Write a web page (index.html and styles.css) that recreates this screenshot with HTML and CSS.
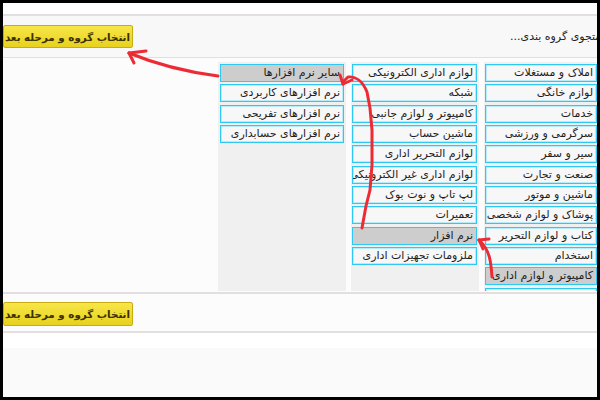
FILE: index.html
```html
<!DOCTYPE html>
<html lang="fa">
<head>
<meta charset="utf-8">
<title>انتخاب گروه</title>
<link rel="stylesheet" href="styles.css">
</head>
<body>
<div class="frame">
  <div class="page">
    <div class="top-gap"></div>
    <div class="header">
      <div class="search-label">جستجوی گروه بندی...</div>
      <button class="next-btn">انتخاب گروه و مرحله بعد</button>
    </div>
    <div class="main">
      <div class="columns">
        <div class="col col-first">
          <div class="item">املاک و مستغلات</div>
          <div class="item">لوازم خانگی</div>
          <div class="item">خدمات</div>
          <div class="item">سرگرمی و ورزشی</div>
          <div class="item">سیر و سفر</div>
          <div class="item">صنعت و تجارت</div>
          <div class="item">ماشین و موتور</div>
          <div class="item">پوشاک و لوازم شخصی</div>
          <div class="item">کتاب و لوازم التحریر</div>
          <div class="item">استخدام</div>
          <div class="item selected">کامپیوتر و لوازم اداری</div>
          <div class="item">موبایل و تبلت</div>
        </div>
        <div class="col">
          <div class="item">لوازم اداری الکترونیکی</div>
          <div class="item">شبکه</div>
          <div class="item">کامپیوتر و لوازم جانبی</div>
          <div class="item">ماشین حساب</div>
          <div class="item">لوازم التحریر اداری</div>
          <div class="item">لوازم اداری غیر الکترونیکی</div>
          <div class="item">لپ تاپ و نوت بوک</div>
          <div class="item">تعمیرات</div>
          <div class="item selected">نرم افزار</div>
          <div class="item">ملزومات تجهیزات اداری</div>
        </div>
        <div class="col col-narrow">
          <div class="item selected">سایر نرم افزارها</div>
          <div class="item">نرم افزارهای کاربردی</div>
          <div class="item">نرم افزارهای تفریحی</div>
          <div class="item">نرم افزارهای حسابداری</div>
        </div>
      </div>
    </div>
    <div class="footer">
      <button class="next-btn">انتخاب گروه و مرحله بعد</button>
    </div>
    <div class="tail-white"></div>
    <div class="tail"></div>
  </div>
</div>
<svg class="marks" width="600" height="400" viewBox="0 0 600 400">
  <g fill="none" stroke="#ec2b35" stroke-width="3" stroke-linecap="round" stroke-linejoin="round">
    <path d="M218,76 C195,73 165,68 129,53"/>
    <path d="M129,53 L146,51"/>
    <path d="M129,53 L134,63"/>
    <path d="M362,228 L366,206 L370,190 L372,165 L372,130 L370,108 L367,92 C363,82 356,76 348,77 L343,82"/>
    <path d="M343,84 L340,75"/>
    <path d="M343,84 L352,80"/>
    <path d="M492,277 C491,262 490,250 479,240"/>
    <path d="M479,240 L489,239"/>
    <path d="M479,240 L483,249"/>
  </g>
</svg>
</body>
</html>
```

FILE: styles.css
```css
html, body {
  margin: 0;
  padding: 0;
  background: #000;
}
body {
  position: relative;
  width: 600px;
  height: 400px;
  overflow: hidden;
  font-family: "DejaVu Sans", sans-serif;
}
.frame {
  margin: 3px 0 0 3px;
  width: 594px;
  height: 394px;
  overflow: hidden;
  background: #fafafa;
}
.page {
  width: 596px;
}
.top-gap {
  height: 11px;
  background: #ffffff;
}
.header {
  direction: rtl;
  display: flex;
  align-items: center;
  justify-content: space-between;
  height: 41px;
  background: #f8f8f8;
  border-top: 2px solid #e3dfe0;
  border-bottom: 1px solid #e3dfe0;
}
.search-label {
  margin-right: -13px;
  font-size: 11px;
  color: #222;
  white-space: nowrap;
}
.next-btn {
  direction: rtl;
  margin: 0;
  width: 130px;
  height: 23px;
  padding: 0 2px;
  border: 1px solid #c8ad12;
  border-radius: 2px;
  background: linear-gradient(#f7e648, #e8d11e);
  color: #3b3100;
  font-family: "DejaVu Sans", sans-serif;
  font-weight: bold;
  font-size: 10.3px;
  white-space: nowrap;
  overflow: hidden;
  text-align: center;
}
.main {
  height: 236px;
  background: #fcfcfc;
  border-bottom: 2px solid #e3dfe0;
  box-sizing: border-box;
  padding-top: 4px;
}
.columns {
  direction: rtl;
  display: flex;
  gap: 5px;
}
.col {
  width: 128px;
  height: 229px;
  box-sizing: border-box;
  padding: 2px 2px 0 1px;
  background: #f0f0f0;
  overflow: hidden;
}
.col-first {
  width: 115px;
}
.col-narrow {
  padding: 2px 2px 0 2px;
}
.item {
  height: 18px;
  box-sizing: border-box;
  margin-bottom: 2.35px;
  padding: 0 3px;
  border: 1px solid #2ec8f2;
  box-shadow: inset 0 0 0 1px #b6ebfa;
  background: #f7f7f7;
  color: #1d1d1d;
  font-size: 11px;
  line-height: 16px;
  white-space: nowrap;
  overflow: hidden;
  text-align: right;
}
.item.selected {
  background: #cdcdcd;
  box-shadow: none;
}
.footer {
  height: 39px;
  box-sizing: border-box;
  padding-top: 8px;
  background: #fcfcfc;
  border-bottom: 2px solid #e3dfe0;
}
.footer .next-btn {
  height: 24px;
}
.tail-white {
  height: 15px;
  background: #ffffff;
}
.tail {
  height: 60px;
  background: #fafafa;
}
.marks {
  position: absolute;
  top: 0;
  left: 0;
  pointer-events: none;
}
```
